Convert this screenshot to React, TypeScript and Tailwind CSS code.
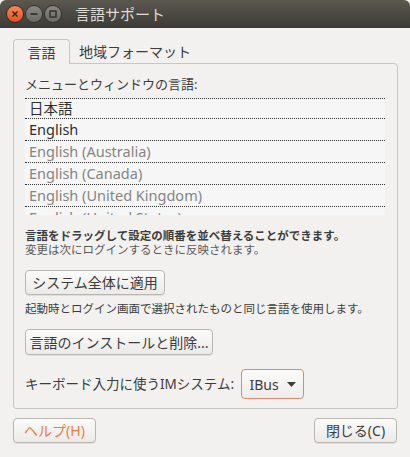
import React from 'react';

const font = { fontFamily: '"Noto Sans", "Noto Sans CJK JP", sans-serif' };

const langs = [
  { label: '日本語', active: true, h: 'h-[20px]' },
  { label: 'English', active: true, h: 'h-[22px]' },
  { label: 'English (Australia)', active: false, h: 'h-[22px]' },
  { label: 'English (Canada)', active: false, h: 'h-[22px]' },
  { label: 'English (United Kingdom)', active: false, h: 'h-[22px]' },
  { label: 'English (United States)', active: false, h: 'h-[22px]' },
];

const TitleButton: React.FC<{ kind: 'close' | 'min' | 'max' }> = ({ kind }) => {
  if (kind === 'close') {
    return (
      <div className="w-[18px] h-[18px] rounded-full bg-gradient-to-b from-[#f5885a] to-[#e2501e] border border-[#3a2a22] flex items-center justify-center">
        <svg width="8" height="8" viewBox="0 0 8 8">
          <path d="M1.5 1.5 L6.5 6.5 M6.5 1.5 L1.5 6.5" stroke="#3b1d10" strokeWidth="1.4" />
        </svg>
      </div>
    );
  }
  return (
    <div className="w-[18px] h-[18px] rounded-full bg-gradient-to-b from-[#8a8882] to-[#6c6a65] border border-[#35342f] flex items-center justify-center">
      {kind === 'min' ? (
        <svg width="10" height="10" viewBox="0 0 10 10">
          <path d="M1.5 5 H8.5" stroke="#2f2e2a" strokeWidth="1.6" />
        </svg>
      ) : (
        <svg width="10" height="10" viewBox="0 0 10 10">
          <rect x="2" y="2" width="6" height="6" fill="none" stroke="#2f2e2a" strokeWidth="1.4" />
        </svg>
      )}
    </div>
  );
};

const Button: React.FC<{ children: React.ReactNode; className?: string }> = ({ children, className = '' }) => (
  <div
    className={`flex items-center justify-center rounded-[4px] border border-[#b8b6b1] bg-gradient-to-b from-[#fbfbfa] to-[#ebeae8] shadow-[0_1px_0_rgba(0,0,0,0.08)] ${className}`}
  >
    {children}
  </div>
);

export default function App() {
  return (
    <div className="w-[410px] h-[457px] bg-[#f2f1f0] overflow-hidden flex flex-col" style={font}>
      {/* Title bar */}
      <div className="h-[28px] rounded-t-[6px] bg-gradient-to-b from-[#5b5850] to-[#3c3b37] flex items-center pl-[6px] shrink-0">
        <div className="flex items-center gap-[1px]">
          <TitleButton kind="close" />
          <TitleButton kind="min" />
          <TitleButton kind="max" />
        </div>
        <span className="ml-[13px] text-[15px] text-[#dfdbd2] leading-none">言語サポート</span>
      </div>

      <div className="flex-1 px-[13px] pt-[12px] flex flex-col">
        {/* Tabs */}
        <div className="flex items-end h-[24px] -mb-px relative z-10">
          <div className="w-[57px] h-[25px] border border-[#c9c7c3] border-b-0 rounded-t-[4px] bg-[#f2f1f0] flex items-center justify-center text-[14px] text-[#3c3c3c]">
            言語
          </div>
          <div className="w-[130px] h-[24px] flex items-center justify-center text-[14px] text-[#3c3c3c] border-b border-[#c9c7c3]">
            地域フォーマット
          </div>
        </div>

        {/* Notebook frame */}
        <div className="w-[385px] h-[346px] border border-[#c9c7c3] rounded-tr-[4px] rounded-b-[3px] px-[11px] pt-[11px] flex flex-col">
          <div className="text-[13px] text-[#3c3c3c] leading-[18px] h-[23px]">メニューとウィンドウの言語:</div>

          <div className="w-[360px] h-[117px] bg-[#f6f6f6] overflow-hidden">
            {langs.map((l) => (
              <div
                key={l.label}
                className={`${l.h} border-t border-dotted border-[#333] px-[4px] flex items-center text-[14.5px] leading-none ${
                  l.active ? 'text-[#2f2f2f]' : 'text-[#858585]'
                }`}
              >
                {l.label}
              </div>
            ))}
          </div>

          <div className="mt-[14px] text-[11.5px] font-bold text-[#3c3c3c] leading-[14px]">
            言語をドラッグして設定の順番を並べ替えることができます。
          </div>
          <div className="text-[11.5px] text-[#5a5a5a] leading-[14px]">変更は次にログインするときに反映されます。</div>

          <Button className="mt-[13px] w-[140px] h-[25px] text-[14px] text-[#3c3c3c]">システム全体に適用</Button>

          <div className="mt-[7px] text-[11.5px] text-[#3c3c3c] leading-[14px]">
            起動時とログイン画面で選択されたものと同じ言語を使用します。
          </div>

          <Button className="mt-[13px] w-[188px] h-[26px] text-[14px] text-[#3c3c3c]">言語のインストールと削除...</Button>

          <div className="mt-[14px] flex items-center">
            <span className="text-[13.5px] text-[#3c3c3c]">キーボード入力に使うIMシステム:</span>
            <div className="ml-[7px] w-[63px] h-[30px] rounded-[4px] border border-[#e08a60] bg-gradient-to-b from-[#fbfbfa] to-[#eeedeb] flex items-center justify-center gap-[8px] text-[14px] text-[#3c3c3c]">
              IBus
              <svg width="9" height="5" viewBox="0 0 9 5">
                <path d="M0 0 H9 L4.5 5 Z" fill="#3c3c3c" />
              </svg>
            </div>
          </div>
        </div>

        {/* Bottom buttons */}
        <div className="mt-[9px] flex justify-between">
          <Button className="w-[83px] h-[25px] text-[14px] text-[#ef7a45]">ヘルプ(H)</Button>
          <Button className="w-[83px] h-[25px] text-[14px] text-[#3c3c3c]">閉じる(C)</Button>
        </div>
      </div>
    </div>
  );
}
